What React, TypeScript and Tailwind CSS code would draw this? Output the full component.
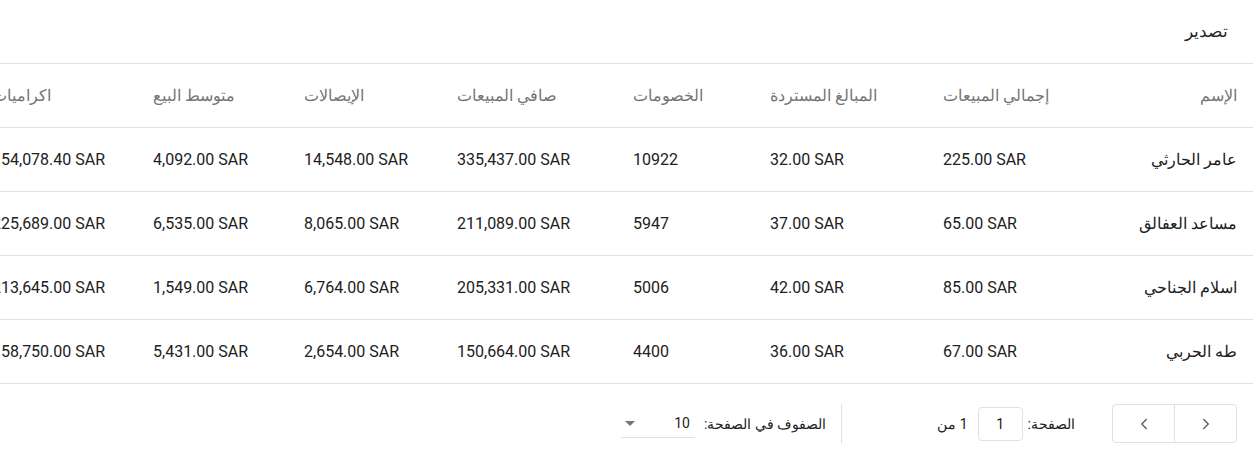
import React from "react";
import { ChevronLeft, ChevronRight } from "lucide-react";

const columns = [
  "الإسم",
  "إجمالي المبيعات",
  "المبالغ المستردة",
  "الخصومات",
  "صافي المبيعات",
  "الإيصالات",
  "متوسط البيع",
  "اكراميات",
];

const rows = [
  ["عامر الحارثي", "225.00 SAR", "32.00 SAR", "10922", "335,437.00 SAR", "14,548.00 SAR", "4,092.00 SAR", "154,078.40 SAR"],
  ["مساعد العفالق", "65.00 SAR", "37.00 SAR", "5947", "211,089.00 SAR", "8,065.00 SAR", "6,535.00 SAR", "225,689.00 SAR"],
  ["اسلام الجناحي", "85.00 SAR", "42.00 SAR", "5006", "205,331.00 SAR", "6,764.00 SAR", "1,549.00 SAR", "213,645.00 SAR"],
  ["طه الحربي", "67.00 SAR", "36.00 SAR", "4400", "150,664.00 SAR", "2,654.00 SAR", "5,431.00 SAR", "158,750.00 SAR"],
];

// rtl grid: first track is the rightmost column
const gridCols =
  "grid grid-cols-[160px_166px_173px_137px_176px_153px_151px_161px] w-[1277px]";

export default function App() {
  return (
    <div
      dir="rtl"
      className="w-[1253px] h-[467px] overflow-hidden bg-white font-['Roboto','Noto_Sans',sans-serif] text-[rgba(0,0,0,0.87)]">
      <div className="h-16 flex items-center pr-[25px] border-b border-[#e0e0e0] text-[17px]">
        تصدير
      </div>

      <div className={`${gridCols} h-16 items-center border-b border-[#e0e0e0] text-base text-[#757575]`}>
        {columns.map((col, i) => (
          <div key={col} dir={i === 0 ? "rtl" : "ltr"} className="px-4 whitespace-nowrap">
            <span dir="rtl">{col}</span>
          </div>
        ))}
      </div>

      {rows.map((row) => (
        <div
          key={row[0]}
          className={`${gridCols} h-16 items-center border-b border-[#e0e0e0] text-base text-[#212121]`}>
          {row.map((cell, i) => (
            <div key={i} dir={i === 0 ? "rtl" : "ltr"} className="px-4 whitespace-nowrap">
              {cell}
            </div>
          ))}
        </div>
      ))}

      <div className="flex items-center pt-[20px] pr-4 text-sm text-[#212121]">
        <div className="flex h-[39px] w-[125px] border border-[#e0e0e0] rounded">
          <button className="flex-1 flex items-center justify-center border-l border-[#e0e0e0] text-[#616161]">
            <ChevronRight size={18} strokeWidth={2} />
          </button>
          <button className="flex-1 flex items-center justify-center text-[#616161]">
            <ChevronLeft size={18} strokeWidth={2} />
          </button>
        </div>

        <div className="flex items-center mr-[37px]">
          <span>الصفحة:</span>
          <div className="mr-[5px] w-[45px] h-[34px] border border-[#e0e0e0] rounded flex items-center justify-center">
            1
          </div>
          <span className="mr-[10px]">1 من</span>
        </div>

        <div className="mr-[95px] w-px h-[39px] bg-[#e0e0e0]" />

        <div className="flex items-center mr-[15px]">
          <span>الصفوف في الصفحة:</span>
          <div className="mr-[9px] w-[74px] h-[28px] flex items-center justify-between border-b border-[#e0e0e0] pr-[5px] pl-[4px]">
            <span>10</span>
            <span className="w-0 h-0 border-l-[5px] border-r-[5px] border-t-[5px] border-l-transparent border-r-transparent border-t-[#757575]" />
          </div>
        </div>
      </div>
    </div>
  );
}
